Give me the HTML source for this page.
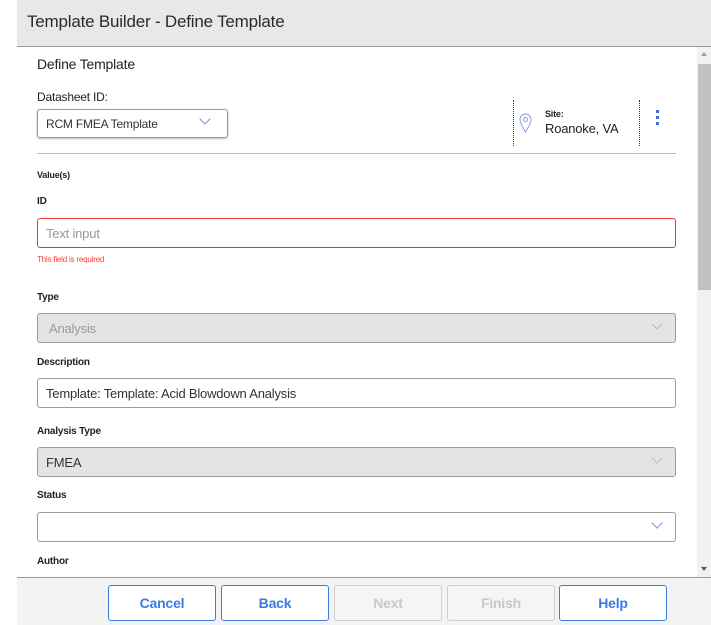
<!DOCTYPE html>
<html><head><style>
*{box-sizing:border-box;margin:0;padding:0}
body{width:711px;height:625px;background:#fff;position:relative;overflow:hidden;font-family:"Liberation Sans",sans-serif;color:#222;letter-spacing:-0.2px}
.a{position:absolute}
.hdr{left:17px;top:0;width:694px;height:47px;background:#e8e8e8;border-bottom:1px solid #9a9a9a}
.hdr span{position:absolute;left:10px;top:12px;font-size:17px;color:#2a2a2a}
.lbl{font-size:10px;font-weight:bold;color:#222}
.box{left:37px;width:639px;height:30px;border:1px solid #9a9a9a;border-radius:3px;font-size:13px;padding:7px 8px;color:#333}
.chev{position:absolute;right:14px;top:8px;width:8px;height:8px;border-right:1px solid #7b8fd6;border-bottom:1px solid #7b8fd6;transform:rotate(45deg)}
.btn{top:585px;width:108px;height:36px;border:1px solid #3c7be0;border-radius:3px;background:#fff;color:#3c7be0;font-weight:bold;font-size:14px;text-align:center;line-height:34px}
.dis{border-color:#d0d0d0;color:#c8c8c8;background:#f5f5f5}
</style></head><body>
<div class="a hdr"><span>Template Builder - Define Template</span></div>
<div class="a" style="left:697px;top:47px;width:14px;height:530px;background:#f1f1f1"></div>
<div class="a" style="left:698px;top:64px;width:13px;height:226px;background:#c1c1c1"></div>
<div class="a" style="left:701px;top:52px;width:0;height:0;border:3px solid transparent;border-bottom:4px solid #a0a0a0;border-top:0"></div>
<div class="a" style="left:701px;top:567px;width:0;height:0;border:3px solid transparent;border-top:4px solid #555;border-bottom:0"></div>
<div class="a" style="left:37px;top:56px;font-size:14px;color:#222">Define Template</div>
<div class="a" style="left:37px;top:90px;font-size:12px">Datasheet ID:</div>
<div class="a box" style="width:191px;top:109px;height:29px;box-shadow:0 1px 2px #bbb;font-size:12px">RCM FMEA Template<div class="chev" style="right:18px;top:5px"></div></div>
<div class="a" style="left:513px;top:100px;height:46px;border-left:1px dotted #333"></div>
<div class="a" style="left:639px;top:100px;height:46px;border-left:1px dotted #333"></div>
<svg class="a" style="left:519px;top:113px" width="13" height="20" viewBox="0 0 13 20"><path d="M6.5 19 C3 13 1 10 1 6.5 A5.5 5.5 0 0 1 12 6.5 C12 10 10 13 6.5 19Z" fill="none" stroke="#8a9ce0"/><circle cx="6.5" cy="6.5" r="2" fill="none" stroke="#8a9ce0"/></svg>
<div class="a" style="left:545px;top:109px;font-size:9px;font-weight:bold">Site:</div>
<div class="a" style="left:545px;top:121px;font-size:13px">Roanoke, VA</div>
<div class="a" style="left:656px;top:110px;width:3px;height:3px;background:#3c6ed8;box-shadow:0 6px 0 #3c6ed8,0 12px 0 #3c6ed8"></div>
<div class="a" style="left:37px;top:153px;width:639px;border-top:1px solid #bbb"></div>
<div class="a lbl" style="left:37px;top:170px;font-size:9px">Value(s)</div>
<div class="a lbl" style="left:37px;top:196px">ID</div>
<div class="a box" style="top:218px;border-color:#e53935;color:#999">Text input</div>
<div class="a" style="left:37px;top:255px;font-size:8px;color:#ff3b3b">This field is required</div>
<div class="a lbl" style="left:37px;top:292px">Type</div>
<div class="a box" style="top:313px;background:#e4e4e4;color:#999;padding-left:11px">Analysis<div class="chev" style="top:6px;border-color:#bbb"></div></div>
<div class="a lbl" style="left:37px;top:357px">Description</div>
<div class="a box" style="top:378px">Template: Template: Acid Blowdown Analysis</div>
<div class="a lbl" style="left:37px;top:426px">Analysis Type</div>
<div class="a box" style="top:447px;background:#e4e4e4">FMEA<div class="chev" style="top:6px;border-color:#bbb"></div></div>
<div class="a lbl" style="left:37px;top:490px">Status</div>
<div class="a box" style="top:512px"><div class="chev" style="top:6px"></div></div>
<div class="a lbl" style="left:37px;top:556px">Author</div>
<div class="a" style="left:17px;top:577px;width:694px;height:48px;background:#f3f3f3;border-top:1px solid #9a9a9a"></div>
<div class="a btn" style="left:108px">Cancel</div>
<div class="a btn" style="left:221px">Back</div>
<div class="a btn dis" style="left:334px">Next</div>
<div class="a btn dis" style="left:447px">Finish</div>
<div class="a btn" style="left:559px">Help</div>
</body></html>
